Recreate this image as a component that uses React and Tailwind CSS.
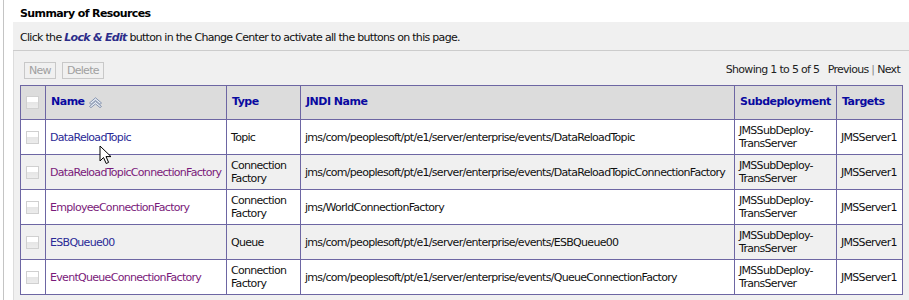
import React from 'react';

const rows = [
  { name: 'DataReloadTopic', visited: false, type: ['Topic'], jndi: 'jms/com/peoplesoft/pt/e1/server/enterprise/events/DataReloadTopic' },
  { name: 'DataReloadTopicConnectionFactory', visited: true, type: ['Connection', 'Factory'], jndi: 'jms/com/peoplesoft/pt/e1/server/enterprise/events/DataReloadTopicConnectionFactory' },
  { name: 'EmployeeConnectionFactory', visited: true, type: ['Connection', 'Factory'], jndi: 'jms/WorldConnectionFactory' },
  { name: 'ESBQueue00', visited: false, type: ['Queue'], jndi: 'jms/com/peoplesoft/pt/e1/server/enterprise/events/ESBQueue00' },
  { name: 'EventQueueConnectionFactory', visited: true, type: ['Connection', 'Factory'], jndi: 'jms/com/peoplesoft/pt/e1/server/enterprise/events/QueueConnectionFactory' },
];

function Check() {
  return (
    <div className="w-[13px] h-[13px] border border-[#d0d0d0] bg-[linear-gradient(#ffffff_0%,#ffffff_50%,#e6e6e6_50%,#ececec_100%)]" />
  );
}

function SortIcon() {
  return (
    <svg width="15" height="11" viewBox="0 0 15 11" className="ml-[3px]">
      <path d="M1.5 6 L7.5 0.8 L13.5 6 L12 7.3 L7.5 3.4 L3 7.3 Z" fill="#e8eef6" stroke="#7a8aa8" strokeWidth="0.9" />
      <path d="M1.5 9.5 L7.5 4.3 L13.5 9.5 L12 10.6 L7.5 6.9 L3 10.6 Z" fill="#e8eef6" stroke="#7a8aa8" strokeWidth="0.9" />
    </svg>
  );
}

function Cursor() {
  return (
    <svg width="14" height="20" viewBox="0 0 14 20" className="absolute left-[99px] top-[145px]">
      <path d="M1 1 L1 16 L4.5 12.5 L7.2 18.5 L9.6 17.4 L7 11.6 L12 11.6 Z" fill="#fff" stroke="#000" strokeWidth="1" strokeLinejoin="miter" />
    </svg>
  );
}

export default function App() {
  return (
    <div className="relative w-[909px] h-[300px] overflow-hidden bg-white text-[11px] text-[#111] font-['DejaVu_Sans',sans-serif] tracking-[-0.7px] pl-[3px]">
      <div className="h-full border-l border-[#c4c4c4] flex flex-col">
        {/* header */}
        <div className="h-[22px] pl-[16px] pt-[7px] text-[11px] font-bold text-black leading-[14px] tracking-[-0.6px]">
          Summary of Resources
        </div>

        <div className="ml-[9px] flex-1 bg-[#f0f0f0] flex flex-col">
          <div className="h-[29px] border-b border-[#cccccc] pl-[7px] pt-[9px] leading-[13px]">
            Click the <i className="font-bold text-[#2c2c8a]">Lock &amp; Edit</i> button in the Change Center to activate all the buttons on this page.
          </div>

          <div className="flex-1 border-l border-[#dcdcdc] pl-[6px] pr-[5px] flex flex-col">
            {/* toolbar */}
            <div className="h-[34px] flex items-center justify-between pl-[4px] pr-[4px] pt-[5px]">
              <div className="flex gap-[6px]">
                <span className="h-[17px] px-[4px] border border-[#c8c8c8] text-[#a0a0a0] leading-[15px]">New</span>
                <span className="h-[17px] px-[4px] border border-[#c8c8c8] text-[#a0a0a0] leading-[15px]">Delete</span>
              </div>
              <div className="text-[#222]">
                Showing 1 to 5 of 5&nbsp;&nbsp; Previous <span className="text-[#888]">|</span> Next
              </div>
            </div>

            {/* table */}
            <table className="table-fixed border-collapse w-[882px] border border-[#6d66a3]">
              <colgroup>
                <col className="w-[25px]" />
                <col className="w-[181px]" />
                <col className="w-[74px]" />
                <col className="w-[434px]" />
                <col className="w-[102px]" />
                <col className="w-[66px]" />
              </colgroup>
              <thead>
                <tr className="h-[34px] bg-[#dcdcdc] text-left font-bold text-[#0a0aa0] tracking-[-0.5px]">
                  <th className="border border-[#6d66a3] px-[5px]"><Check /></th>
                  <th className="border border-[#6d66a3] px-[5px]">
                    <span className="inline-flex items-center">Name<SortIcon /></span>
                  </th>
                  <th className="border border-[#6d66a3] px-[5px]">Type</th>
                  <th className="border border-[#6d66a3] px-[5px]">JNDI Name</th>
                  <th className="border border-[#6d66a3] px-[5px]">Subdeployment</th>
                  <th className="border border-[#6d66a3] px-[5px]">Targets</th>
                </tr>
              </thead>
              <tbody>
                {rows.map((r, i) => (
                  <tr key={r.name} className={`h-[35px] leading-[13px] ${i % 2 ? 'bg-[#f0f0f0]' : 'bg-white'}`}>
                    <td className="border border-[#6d66a3] px-[5px]"><Check /></td>
                    <td className={`border border-[#6d66a3] px-[4px] whitespace-nowrap ${r.visited ? 'text-[#7a1a7a]' : 'text-[#2a2a96]'}`}>{r.name}</td>
                    <td className="border border-[#6d66a3] px-[4px]">
                      {r.type.map(t => <div key={t}>{t}</div>)}
                    </td>
                    <td className="border border-[#6d66a3] px-[4px] whitespace-nowrap">{r.jndi}</td>
                    <td className="border border-[#6d66a3] px-[4px]">
                      <div>JMSSubDeploy-</div>
                      <div>TransServer</div>
                    </td>
                    <td className="border border-[#6d66a3] px-[4px]">JMSServer1</td>
                  </tr>
                ))}
              </tbody>
            </table>
          </div>
        </div>
      </div>
      <Cursor />
    </div>
  );
}
